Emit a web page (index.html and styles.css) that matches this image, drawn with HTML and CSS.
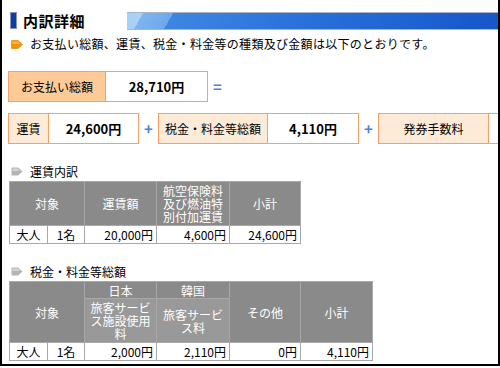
FILE: index.html
```html
<!DOCTYPE html>
<html lang="ja">
<head>
<meta charset="utf-8">
<link rel="stylesheet" href="styles.css">
</head>
<body>
<div class="frame">
  <div class="heading">
    <span class="heading-mark"></span>
    <h1 class="heading-title">内訳詳細</h1>
    <span class="heading-bar"></span>
  </div>
  <p class="lead">
    <svg class="arrow" width="12" height="9" viewBox="0 0 12 9"><path d="M1 0.5 H7 L11.5 4.5 L7 8.5 H1 Q0.5 8.5 0.5 8 V1 Q0.5 0.5 1 0.5Z" fill="#f39200" stroke="#e07a00" stroke-width="0.6"/><path d="M1.5 1.5 H6.5 L9 4 H1.5Z" fill="#ffb84d"/></svg>
    お支払い総額、運賃、税金・料金等の種類及び金額は以下のとおりです。
  </p>

  <div class="sum-row">
    <div class="box">
      <div class="lbl lbl-total w-total">お支払い総額</div>
      <div class="val w-totalval">28,710円</div>
    </div>
    <span class="op">=</span>
  </div>

  <div class="sum-row row2">
    <div class="box">
      <div class="lbl w-fare">運賃</div>
      <div class="val w-fareval">24,600円</div>
    </div>
    <span class="op op-plus">+</span>
    <div class="box">
      <div class="lbl w-tax">税金・料金等総額</div>
      <div class="val w-taxval">4,110円</div>
    </div>
    <span class="op op-plus">+</span>
    <div class="box">
      <div class="lbl w-fee">発券手数料</div>
      <div class="val w-feeval"></div>
    </div>
  </div>

  <p class="sub">
    <svg class="arrow" width="12" height="9" viewBox="0 0 12 9"><path d="M1 0.5 H7 L11.5 4.5 L7 8.5 H1 Q0.5 8.5 0.5 8 V1 Q0.5 0.5 1 0.5Z" fill="#b4b4b4"/><path d="M1.5 1.5 H6.5 L9 4 H1.5Z" fill="#d4d4d4"/></svg>
    運賃内訳
  </p>
  <table class="tbl">
    <colgroup><col class="c1"><col class="c2"><col class="c3"><col class="c4"><col class="c5"></colgroup>
    <tr class="hrow">
      <th colspan="2">対象</th>
      <th>運賃額</th>
      <th>航空保険料及び燃油特別付加運賃</th>
      <th>小計</th>
    </tr>
    <tr class="drow">
      <td class="ctr">大人</td>
      <td class="ctr">1名</td>
      <td class="num">20,000円</td>
      <td class="num">4,600円</td>
      <td class="num">24,600円</td>
    </tr>
  </table>

  <p class="sub sub2">
    <svg class="arrow" width="12" height="9" viewBox="0 0 12 9"><path d="M1 0.5 H7 L11.5 4.5 L7 8.5 H1 Q0.5 8.5 0.5 8 V1 Q0.5 0.5 1 0.5Z" fill="#b4b4b4"/><path d="M1.5 1.5 H6.5 L9 4 H1.5Z" fill="#d4d4d4"/></svg>
    税金・料金等総額
  </p>
  <table class="tbl">
    <colgroup><col class="c1"><col class="c2"><col class="c3"><col class="c4"><col class="c5"><col class="c6"></colgroup>
    <tr class="hrow-s">
      <th colspan="2" rowspan="2">対象</th>
      <th>日本</th>
      <th>韓国</th>
      <th rowspan="2">その他</th>
      <th rowspan="2">小計</th>
    </tr>
    <tr class="hrow">
      <th class="light">旅客サービス施設使用料</th>
      <th class="light">旅客サービス料</th>
    </tr>
    <tr class="drow">
      <td class="ctr">大人</td>
      <td class="ctr">1名</td>
      <td class="num">2,000円</td>
      <td class="num">2,110円</td>
      <td class="num">0円</td>
      <td class="num">4,110円</td>
    </tr>
  </table>
</div>
</body>
</html>
```

FILE: styles.css
```css
html, body {
  margin: 0;
  padding: 0;
  background: #fff;
}
body {
  font-family: "Noto Sans CJK JP", "Noto Sans", sans-serif;
  font-size: 12px;
  color: #000;
}
.frame {
  box-sizing: border-box;
  width: 500px;
  height: 366px;
  border: 2px solid #000;
  border-top: 0;
  overflow: hidden;
  padding-left: 6px;
}
.heading {
  display: flex;
  align-items: center;
  margin-top: 12px;
  height: 17px;
  margin-right: -2px;
}
.heading-mark {
  box-sizing: border-box;
  width: 7px;
  height: 17px;
  margin-left: 2px;
  background: #0a3ea8;
  border: 1px solid #8a96b8;
}
.heading-title {
  margin: 0 0 0 6px;
  font-size: 15px;
  font-weight: bold;
  line-height: 17px;
  width: 104px;
  letter-spacing: 0.5px;
}
.heading-bar {
  flex: 1;
  height: 16px;
  border-top: 1px solid #a9b4c4;
  border-bottom: 1px solid #a9b4c4;
  background: linear-gradient(120deg, #a9d0f7 0, #a9d0f7 14px, #7fb4ef 14px, #6ea8ec 40px, #3f86e2 40px, #2a72dc 45%, #1656c8 100%);
}
.lead {
  margin: 7px 0 0 0;
  display: flex;
  align-items: center;
  height: 16px;
  line-height: 16px;
  white-space: nowrap;
  letter-spacing: 0.3px;
}
.arrow {
  margin: 0 7px 0 3px;
  flex: none;
}
.sum-row {
  display: flex;
  align-items: center;
  margin-top: 19px;
  white-space: nowrap;
}
.row2 {
  margin-top: 11px;
}
.box {
  display: flex;
  flex: none;
  height: 31px;
  box-sizing: border-box;
  border: 1px solid #f6a066;
}
.lbl, .val {
  box-sizing: border-box;
  display: flex;
  align-items: center;
  justify-content: center;
  font-size: 12px;
}
.lbl {
  background: #fdebd7;
  border-right: 1px solid #f6a066;
}
.lbl-total {
  background: #fecb98;
}
.val {
  background: #fff;
  font-weight: bold;
  font-size: 13px;
}
.w-total { width: 97px; }
.w-totalval { width: 101px; }
.w-fare { width: 40px; }
.w-fareval { width: 89px; }
.w-tax { width: 109px; }
.w-taxval { width: 90px; }
.w-fee { width: 110px; }
.w-feeval { width: 90px; }
.op {
  width: 19px;
  text-align: center;
  color: #4d82dc;
  font-weight: bold;
  font-size: 15px;
  flex: none;
}
.op-plus {
  font-size: 15px;
}
.sub {
  margin: 20px 0 0 0;
  display: flex;
  align-items: center;
  height: 15px;
  line-height: 15px;
  white-space: nowrap;
}
.sub2 {
  margin-top: 20px;
}
.tbl {
  border-collapse: collapse;
  table-layout: fixed;
  margin: 2px 0 0 1px;
  border: 1px solid #a0a0a0;
}
.c1 { width: 38px; }
.c2 { width: 37px; }
.c3 { width: 72px; }
.c4 { width: 73px; }
.c5 { width: 71px; }
.c6 { width: 72px; }
.tbl th, .tbl td {
  border: 1px solid #a8a8a8;
  font-size: 12px;
  line-height: 13px;
  padding: 1px 4px;
}
.tbl th {
  background: #8a8a8a;
  color: #fff;
  font-weight: normal;
  text-align: center;
}
.tbl th.light {
  background: #999;
}
.hrow th {
  height: 43px;
  padding: 0 4px;
}
.hrow-s th {
  height: 14px;
}
.drow td {
  height: 15px;
  padding: 1px 3px;
}
.ctr { text-align: center; }
.num { text-align: right; }
```
